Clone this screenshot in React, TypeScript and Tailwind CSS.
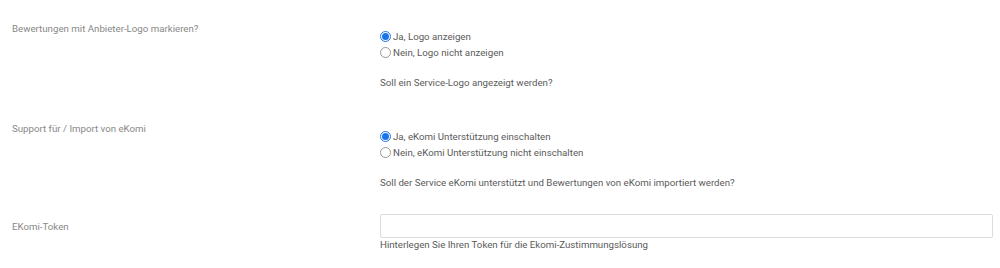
import { useState } from "react";

interface RadioOption {
    value: string;
    label: string;
}

interface RadioRowProps {
    label: string;
    name: string;
    options: RadioOption[];
    value: string;
    onChange: (value: string) => void;
    hint: string;
}

const Radio = ({
    checked,
    label,
    onClick,
}: {
    checked: boolean;
    label: string;
    onClick: () => void;
}) => {
    return (
        <label
            onClick={onClick}
            className="flex h-4 cursor-pointer items-center gap-[2px] text-[#5a5a5a]"
        >
            {checked ? (
                <span className="flex h-[11px] w-[11px] items-center justify-center rounded-full border border-[#1a73e8] bg-white">
                    <span className="h-[7px] w-[7px] rounded-full bg-[#1a73e8]" />
                </span>
            ) : (
                <span className="h-[11px] w-[11px] rounded-full border border-[#999] bg-white" />
            )}
            <span>{label}</span>
        </label>
    );
};

const RadioRow = ({ label, options, value, onChange, hint }: RadioRowProps) => {
    return (
        <div className="grid h-[100px] grid-cols-[368px_1fr]">
            <div className="pt-[2px] text-[#888]">{label}</div>

            <div>
                <div className="pt-2">
                    {options.map((option) => (
                        <Radio
                            key={option.value}
                            checked={value === option.value}
                            label={option.label}
                            onClick={() => onChange(option.value)}
                        />
                    ))}
                </div>

                <p className="mt-4 text-[#5a5a5a]">{hint}</p>
            </div>
        </div>
    );
};

export default function App() {
    const [logo, setLogo] = useState("yes");
    const [ekomi, setEkomi] = useState("yes");
    const [token, setToken] = useState("");

    return (
        <div
            className="min-h-[268px] bg-white pl-3 pr-[7px] pt-5 text-[9.7px] leading-[13px]"
            style={{ fontFamily: "Roboto, 'Noto Sans', sans-serif" }}
        >
            <RadioRow
                label="Bewertungen mit Anbieter-Logo markieren?"
                name="logo"
                value={logo}
                onChange={setLogo}
                options={[
                    { value: "yes", label: "Ja, Logo anzeigen" },
                    { value: "no", label: "Nein, Logo nicht anzeigen" },
                ]}
                hint="Soll ein Service-Logo angezeigt werden?"
            />

            <RadioRow
                label="Support für / Import von eKomi"
                name="ekomi"
                value={ekomi}
                onChange={setEkomi}
                options={[
                    { value: "yes", label: "Ja, eKomi Unterstützung einschalten" },
                    { value: "no", label: "Nein, eKomi Unterstützung nicht einschalten" },
                ]}
                hint="Soll der Service eKomi unterstützt und Bewertungen von eKomi importiert werden?"
            />

            <div className="-mt-[6px] grid grid-cols-[368px_1fr]">
                <div className="flex h-6 items-center text-[#888]">EKomi-Token</div>

                <div>
                    <input
                        value={token}
                        onChange={(e) => setToken(e.target.value)}
                        className="block h-6 w-full rounded-[2px] border border-[#dcdcdc] bg-white px-2 text-[#555] outline-none"
                    />
                    <p className="text-[#5a5a5a]">
                        Hinterlegen Sie Ihren Token für die Ekomi-Zustimmungslösung
                    </p>
                </div>
            </div>
        </div>
    );
}
